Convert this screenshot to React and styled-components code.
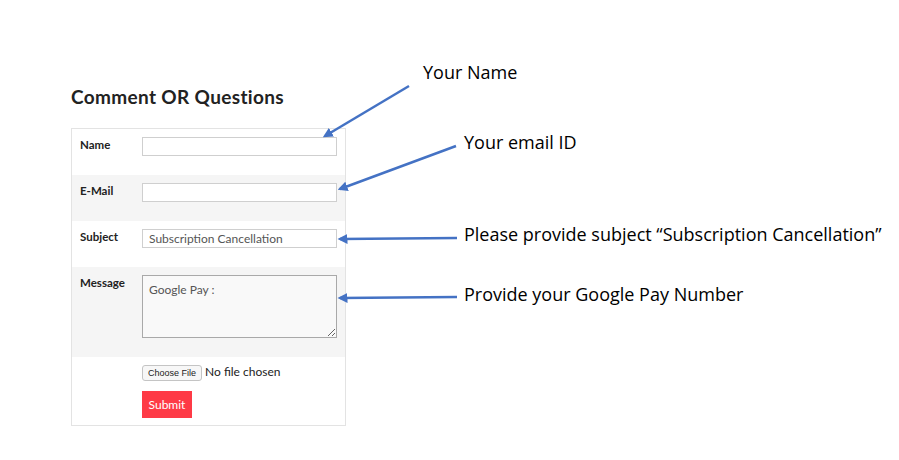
import React from 'react';
import styled, {createGlobalStyle} from 'styled-components';

const GlobalStyle = createGlobalStyle`
body {
  margin: 0;
  background: #fff;
  font-family: "Lato", "Liberation Sans", sans-serif;
}
`;

const Page = styled.div`
position: relative;
width: 899px;
height: 460px;
overflow: hidden;
`;

const Section = styled.div`
padding: 87px 0 0 71px;
width: 275px;
`;

const Heading = styled.h2`
margin: 0 0 21px;
font-family: "Lato", sans-serif;
font-size: 19px;
line-height: 20px;
font-weight: 700;
color: #222;
letter-spacing: 0.35px;
`;

const Card = styled.form`
border: 1px solid #e3e3e3;
`;

const Row = styled.div`
display: grid;
grid-template-columns: 62px 195px;
padding: 8px 8px 19px;
background: ${p => (p.shaded ? '#f5f5f5' : '#fff')};
`;

const Label = styled.label`
font-size: 11.5px;
font-weight: 700;
color: #222;
padding-top: 1px;
`;

const Input = styled.input`
box-sizing: border-box;
width: 195px;
height: 19px;
margin: 0;
padding: 0 6px;
border: 1px solid #cfcfcf;
background: #fff;
font-family: "Lato", sans-serif;
font-size: 12px;
color: #555;
outline: none;
`;

const TextArea = styled.textarea`
box-sizing: border-box;
width: 195px;
height: 63px;
margin: 0;
padding: 6px 6px;
border: 1px solid #a9a9a9;
background: #f9f9f9;
font-family: "Lato", sans-serif;
font-size: 12px;
color: #555;
resize: both;
`;

const Actions = styled.div`
display: flex;
flex-direction: column;
align-items: flex-start;
gap: 10px;
padding: 7px 8px 7px 70px;
`;

const FileInput = styled.input`
font-family: "Lato", sans-serif;
font-size: 12px;
color: #222;
&::file-selector-button {
  font-family: "Liberation Sans", sans-serif;
  font-size: 9px;
  padding: 2px 5px;
  margin-right: 3px;
  border: 1px solid #c4c4c4;
  border-radius: 3px;
  background: #f7f7f7;
  color: #222;
}
`;

const Submit = styled.button`
width: 50px;
height: 27px;
border: none;
background: #fe3a46;
color: #fff;
font-family: "Lato", sans-serif;
font-size: 12px;
padding: 0;
`;

const Notes = styled.svg`
position: absolute;
left: 0;
top: 0;
width: 899px;
height: 460px;
pointer-events: none;
`;

const Note = styled.div`
position: absolute;
left: ${p => p.x}px;
top: ${p => p.y}px;
font-family: "Open Sans", sans-serif;
font-size: 18px;
line-height: 20px;
color: #000;
white-space: nowrap;
`;

const arrows = [
    {x1: 409, y1: 86, x2: 325, y2: 136},
    {x1: 456, y1: 146, x2: 340, y2: 189},
    {x1: 457, y1: 238, x2: 340, y2: 239},
    {x1: 457, y1: 297, x2: 340, y2: 298},
];

const notes = [
    {x: 423, y: 62, text: 'Your Name'},
    {x: 464, y: 132, text: 'Your email ID'},
    {x: 464, y: 224, text: 'Please provide subject \u201CSubscription Cancellation\u201D'},
    {x: 464, y: 284, text: 'Provide your Google Pay Number'},
];

const App = () => {
    return (
        <Page>
            <GlobalStyle/>
            <Section>
                <Heading>Comment OR Questions</Heading>
                <Card onSubmit={e => e.preventDefault()}>
                    <Row>
                        <Label htmlFor='name'>Name</Label>
                        <Input id='name'/>
                    </Row>
                    <Row shaded>
                        <Label htmlFor='email'>E-Mail</Label>
                        <Input id='email'/>
                    </Row>
                    <Row>
                        <Label htmlFor='subject'>Subject</Label>
                        <Input id='subject' defaultValue='Subscription Cancellation'/>
                    </Row>
                    <Row shaded>
                        <Label htmlFor='message'>Message</Label>
                        <TextArea id='message' defaultValue='Google Pay :'/>
                    </Row>
                    <Actions>
                        <FileInput type='file'/>
                        <Submit type='submit'>Submit</Submit>
                    </Actions>
                </Card>
            </Section>
            <Notes viewBox='0 0 899 460'>
                <defs>
                    <marker id='head' markerWidth='4' markerHeight='4' refX='3' refY='2' orient='auto' markerUnits='strokeWidth'>
                        <path d='M0,0 L4,2 L0,4 z' fill='#4472c4'/>
                    </marker>
                </defs>
                {arrows.map((a, i) => (
                    <line key={i} {...a} stroke='#4472c4' strokeWidth='2.5' markerEnd='url(#head)'/>
                ))}
            </Notes>
            {notes.map(n => (
                <Note key={n.text} x={n.x} y={n.y}>{n.text}</Note>
            ))}
        </Page>
    );
};

export default App;
